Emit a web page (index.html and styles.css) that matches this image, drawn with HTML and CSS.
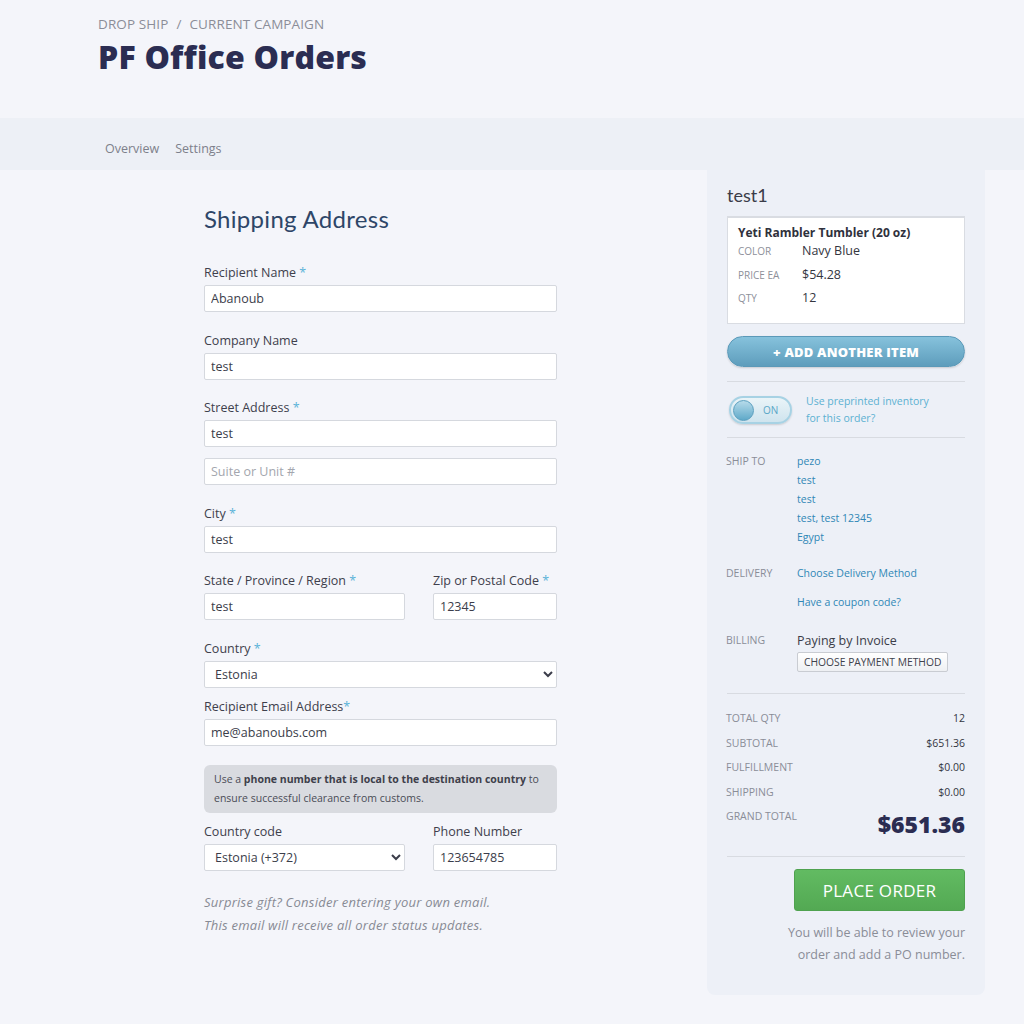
FILE: index.html
```html
<!DOCTYPE html>
<html lang="en">
<head>
<meta charset="utf-8">
<title>PF Office Orders</title>
<link rel="stylesheet" href="styles.css">
</head>
<body>
<header class="page-header">
  <div class="crumbs"><span>DROP SHIP</span><span class="sep">/</span><span>CURRENT CAMPAIGN</span></div>
  <h1 class="title">PF Office Orders</h1>
</header>
<nav class="tabs">
  <a class="tab">Overview</a>
  <a class="tab">Settings</a>
</nav>
<main class="main">
  <section class="form">
    <h2 class="form-title">Shipping Address</h2>
    <div class="field">
      <label class="label">Recipient Name <span class="req">*</span></label>
      <input class="input" value="Abanoub">
    </div>
    <div class="field">
      <label class="label">Company Name</label>
      <input class="input" value="test">
    </div>
    <div class="field">
      <label class="label">Street Address <span class="req">*</span></label>
      <input class="input" value="test">
      <input class="input second" placeholder="Suite or Unit #">
    </div>
    <div class="field">
      <label class="label">City <span class="req">*</span></label>
      <input class="input" value="test">
    </div>
    <div class="row">
      <div class="field wide">
        <label class="label">State / Province / Region <span class="req">*</span></label>
        <input class="input" value="test">
      </div>
      <div class="field narrow">
        <label class="label">Zip or Postal Code <span class="req">*</span></label>
        <input class="input" value="12345">
      </div>
    </div>
    <div class="field tight">
      <label class="label">Country <span class="req">*</span></label>
      <select class="input select"><option>Estonia</option></select>
    </div>
    <div class="field">
      <label class="label">Recipient Email Address<span class="req">*</span></label>
      <input class="input" value="me@abanoubs.com">
    </div>
    <div class="notice">Use a <b>phone number that is local to the destination country</b> to ensure successful clearance from customs.</div>
    <div class="row">
      <div class="field wide">
        <label class="label">Country code</label>
        <select class="input select"><option>Estonia (+372)</option></select>
      </div>
      <div class="field narrow">
        <label class="label">Phone Number</label>
        <input class="input" value="123654785">
      </div>
    </div>
    <p class="hint">Surprise gift? Consider entering your own email.<br>This email will receive all order status updates.</p>
  </section>

  <aside class="summary">
    <h3 class="summary-title">test1</h3>
    <div class="item">
      <div class="item-name">Yeti Rambler Tumbler (20 oz)</div>
      <div class="item-row"><span class="item-key">COLOR</span><span class="item-val">Navy Blue</span></div>
      <div class="item-row"><span class="item-key">PRICE EA</span><span class="item-val">$54.28</span></div>
      <div class="item-row"><span class="item-key">QTY</span><span class="item-val">12</span></div>
    </div>
    <button class="add-btn">+ ADD ANOTHER ITEM</button>
    <div class="toggle-row">
      <div class="toggle"><span class="knob"></span><span class="on">ON</span></div>
      <div class="toggle-text">Use preprinted inventory<br>for this order?</div>
    </div>
    <div class="info">
      <div class="info-row">
        <span class="info-key">SHIP TO</span>
        <div class="info-val link lines">pezo<br>test<br>test<br>test, test 12345<br>Egypt</div>
      </div>
      <div class="info-row delivery">
        <span class="info-key">DELIVERY</span>
        <div class="info-val">
          <div class="link">Choose Delivery Method</div>
          <div class="link coupon">Have a coupon code?</div>
        </div>
      </div>
      <div class="info-row">
        <span class="info-key">BILLING</span>
        <div class="info-val">
          <div class="paying">Paying by Invoice</div>
          <button class="pay-btn">CHOOSE PAYMENT METHOD</button>
        </div>
      </div>
    </div>
    <div class="totals">
      <div class="total-row"><span>TOTAL QTY</span><span class="num">12</span></div>
      <div class="total-row"><span>SUBTOTAL</span><span class="num">$651.36</span></div>
      <div class="total-row"><span>FULFILLMENT</span><span class="num">$0.00</span></div>
      <div class="total-row"><span>SHIPPING</span><span class="num">$0.00</span></div>
      <div class="total-row grand"><span>GRAND TOTAL</span><span class="grand-num">$651.36</span></div>
    </div>
    <div class="place">
      <button class="place-btn">PLACE ORDER</button>
      <p class="place-note">You will be able to review your<br>order and add a PO number.</p>
    </div>
  </aside>
</main>
</body>
</html>
```

FILE: styles.css
```css
* { box-sizing: border-box; }
html, body { margin: 0; padding: 0; }
body {
  background: #f4f5fa;
  font-family: "Open Sans", "Lato", sans-serif;
  color: #3b3d4a;
  width: 1024px;
  height: 1024px;
  overflow: hidden;
}

.page-header {
  height: 118px;
  padding: 15px 0 0 98px;
}
.crumbs {
  font-size: 13.5px;
  color: #8b8d98;
  letter-spacing: 0.1px;
  line-height: 18px;
}
.crumbs .sep { margin: 0 8px; }
.title {
  margin: 4px 0 0;
  font-family: "Open Sans", sans-serif;
  font-weight: 800;
  font-size: 32px;
  line-height: 40px;
  color: #2b2d52;
  letter-spacing: 0.2px;
}

.tabs {
  height: 52px;
  background: #edf0f6;
  padding: 0 0 0 105px;
  display: flex;
  align-items: center;
  gap: 16px;
}
.tab {
  font-size: 12.5px;
  color: #7d808b;
  padding-top: 8px;
}

.main {
  display: flex;
  align-items: flex-start;
  padding: 0 39px 0 204px;
}

.form {
  width: 353px;
  padding-top: 34px;
}
.form-title {
  margin: 0 0 30px;
  font-family: "Lato", sans-serif;
  font-weight: 400;
  font-size: 24px;
  line-height: 30px;
  color: #2e4668;
  letter-spacing: 0.3px;
}
.field { margin-bottom: 19.5px; }
.field.tight { margin-bottom: 10px; }
.label {
  display: block;
  font-size: 12.5px;
  line-height: 17px;
  color: #3e404c;
  margin-bottom: 4px;
}
.req { color: #5bb3d8; }
.input {
  display: block;
  width: 100%;
  height: 27px;
  border: 1px solid #d5d8de;
  border-radius: 2px;
  background: #fff;
  font-family: "Open Sans", sans-serif;
  font-size: 12.5px;
  color: #3b3d4a;
  padding: 0 6px;
  outline: none;
}
.input::placeholder { color: #a3a6ae; }
.input.second { margin-top: 11px; }
.select { padding: 0 4px 0 6px; }

.row {
  display: flex;
  justify-content: space-between;
}
.row .wide { width: 201px; }
.row .narrow { width: 124px; }

.notice {
  background: #d9dbe0;
  border-radius: 6px;
  padding: 5px 10px 5px;
  font-size: 10.5px;
  line-height: 19px;
  color: #4a4c57;
  margin: 1px 0 10px;
}
.notice b { font-weight: 700; color: #3e404b; }

.hint {
  margin: 0 0 0;
  font-style: italic;
  font-size: 13px;
  letter-spacing: 0.25px;
  line-height: 23px;
  color: #878a94;
}

.summary {
  margin-left: auto;
  width: 278px;
  height: 825px;
  background: #edf0f7;
  border-radius: 0 0 8px 8px;
  padding: 13px 20px 0;
}
.summary-title {
  margin: 0 0 9px;
  font-family: "Lato", sans-serif;
  font-weight: 400;
  font-size: 18px;
  line-height: 24px;
  color: #3a3c48;
}
.item {
  background: #fff;
  border: 1px solid #d9dce2;
  border-top-width: 2px;
  height: 108px;
  padding: 6px 10px 0;
}
.item-name {
  font-size: 12px;
  font-weight: 700;
  color: #2f313c;
  line-height: 18px;
  margin-bottom: 0;
}
.item-row {
  display: flex;
  align-items: baseline;
  height: 23.5px;
}
.item-key {
  width: 64px;
  font-size: 10px;
  color: #8d909a;
}
.item-val {
  font-size: 12.5px;
  color: #34363f;
}

.add-btn {
  display: block;
  width: 100%;
  height: 31px;
  margin-top: 12px;
  border: 1px solid #5b99b8;
  border-radius: 16px;
  background: linear-gradient(#86c2dc, #5e9dbc);
  color: #fff;
  font-family: "Open Sans", sans-serif;
  font-weight: 800;
  font-size: 13px;
  letter-spacing: 0.2px;
  box-shadow: 0 1px 2px rgba(0,0,0,0.15);
}

.toggle-row {
  display: flex;
  align-items: center;
  gap: 14px;
  margin-top: 14px;
  padding: 11px 0 10px 2px;
  border-top: 1px solid #d8dbe1;
  border-bottom: 1px solid #d8dbe1;
}
.toggle {
  width: 63px;
  height: 28px;
  border-radius: 14px;
  border: 2px solid #a7d2e4;
  background: linear-gradient(#eaf4f8, #cfe4ee);
  display: flex;
  align-items: center;
  padding-left: 2px;
  box-shadow: 0 1px 2px rgba(0,0,0,0.15);
}
.knob {
  width: 21px;
  height: 21px;
  border-radius: 50%;
  background: linear-gradient(#b6dbea, #5fa9c9);
  border: 1px solid #5a9fbf;
}
.on {
  margin-left: 9px;
  font-size: 10px;
  color: #5aa7c7;
}
.toggle-text {
  font-size: 10.5px;
  line-height: 17px;
  color: #5cb0d2;
}

.info { padding: 14px 0 0; }
.info-row {
  display: flex;
  margin-bottom: 17px;
}
.info-row.delivery { margin-bottom: 19px; }
.info-row:last-child { margin-bottom: 21px; }
.info-key {
  width: 71px;
  flex: none;
  font-size: 10.5px;
  line-height: 19px;
  color: #8a8d97;
  margin-left: -1px;
}
.info-val {
  font-size: 10.5px;
  line-height: 19px;
}
.link { color: #2f87b6; }
.coupon { margin-top: 10px; }
.paying {
  font-size: 12.5px;
  color: #3b3d48;
  line-height: 19px;
}
.pay-btn {
  margin-top: 2px;
  height: 20px;
  padding: 0 6px;
  border: 1px solid #c9ccd2;
  border-radius: 2px;
  background: linear-gradient(#fff, #eef0f3);
  font-family: "Open Sans", sans-serif;
  font-size: 10.3px;
  color: #40424c;
}

.totals {
  border-top: 1px solid #d8dbe1;
  border-bottom: 1px solid #d8dbe1;
  padding: 12px 0 12px;
}
.total-row {
  display: flex;
  justify-content: space-between;
  align-items: flex-start;
  height: 24.5px;
  font-size: 10.5px;
  line-height: 24px;
  color: #8a8d97;
  margin-left: -1px;
}
.total-row .num { color: #34363f; }
.total-row.grand { height: 40px; }
.grand-num {
  font-weight: 800;
  font-size: 23px;
  line-height: 30px;
  margin-top: 5px;
  color: #2b2d52;
}

.place {
  text-align: right;
  padding-top: 12px;
}
.place-btn {
  width: 171px;
  height: 42px;
  border: 1px solid #4fa24f;
  border-radius: 3px;
  background: linear-gradient(#62bb62, #53a953);
  color: #fff;
  font-family: "Open Sans", sans-serif;
  font-size: 17px;
  letter-spacing: 0.3px;
}
.place-note {
  margin: 11px 0 0;
  font-size: 12.5px;
  line-height: 22px;
  color: #8a8d97;
}
```
